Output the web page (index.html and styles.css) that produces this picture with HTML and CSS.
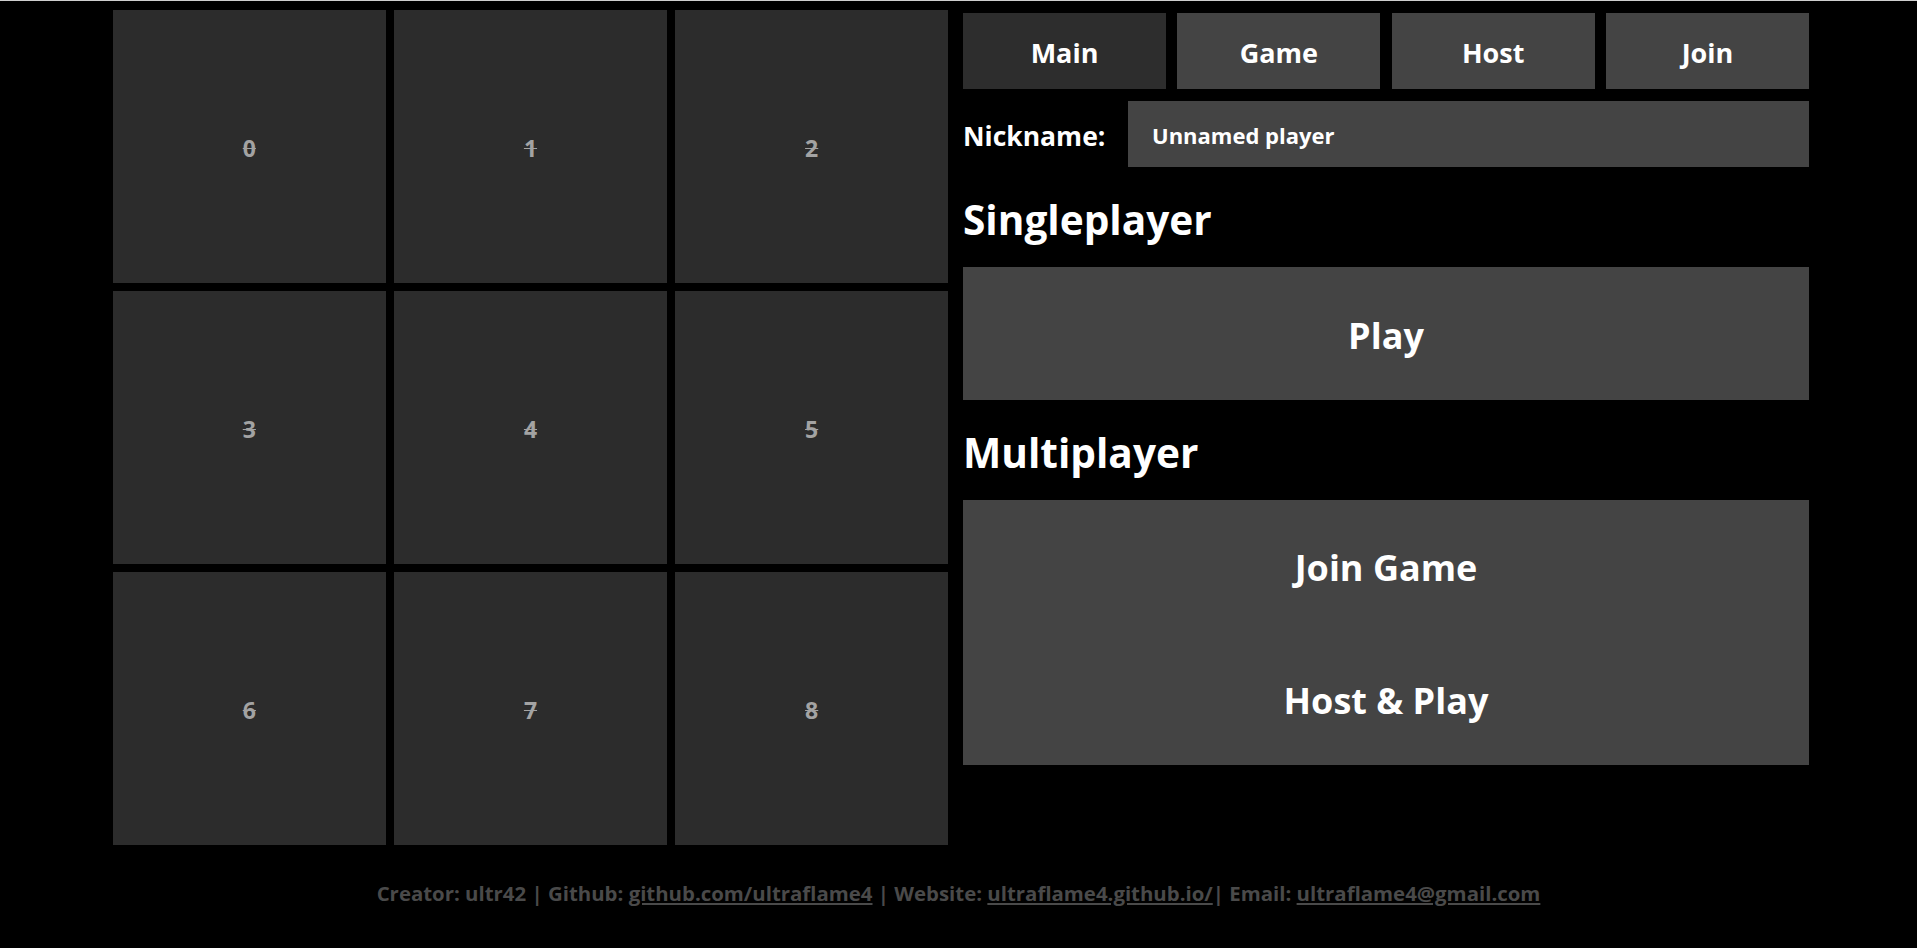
FILE: index.html
```html
<!DOCTYPE html>
<html lang="en">
<head>
<meta charset="utf-8">
<title>Tic Tac Toe</title>
<link rel="stylesheet" href="styles.css">
</head>
<body>
<div class="page">
  <div class="board">
    <div class="cell"><span class="num">0</span></div>
    <div class="cell"><span class="num">1</span></div>
    <div class="cell"><span class="num">2</span></div>
    <div class="cell"><span class="num">3</span></div>
    <div class="cell"><span class="num">4</span></div>
    <div class="cell"><span class="num">5</span></div>
    <div class="cell"><span class="num">6</span></div>
    <div class="cell"><span class="num">7</span></div>
    <div class="cell"><span class="num">8</span></div>
  </div>
  <div class="menu">
    <nav class="tabs">
      <button class="tab active">Main</button>
      <button class="tab">Game</button>
      <button class="tab">Host</button>
      <button class="tab">Join</button>
    </nav>
    <div class="nick-row">
      <label class="nick-label" for="nick">Nickname:</label>
      <input class="nick-input" id="nick" type="text" value="Unnamed player">
    </div>
    <h2 class="heading">Singleplayer</h2>
    <div class="btn-group">
      <button class="big-btn">Play</button>
    </div>
    <h2 class="heading">Multiplayer</h2>
    <div class="btn-group">
      <button class="big-btn">Join Game</button>
      <button class="big-btn">Host &amp; Play</button>
    </div>
  </div>
</div>
<footer class="footer">Creator: ultr42 | Github: <a href="#">github.com/ultraflame4</a> | Website: <a href="#">ultraflame4.github.io/</a>| Email: <a href="#">ultraflame4@gmail.com</a></footer>
</body>
</html>
```
FILE: styles.css
```css
html, body {
  margin: 0;
  padding: 0;
  background: #000;
}

body {
  border-top: 1px solid #cfcfcf;
  font-family: "Open Sans", "Noto Sans", "Liberation Sans", sans-serif;
  font-weight: 700;
  color: #fff;
  min-height: 947px;
  box-sizing: border-box;
}

.page {
  display: flex;
  align-items: flex-start;
  gap: 15px;
  padding: 9px 0 0 113px;
}

.board {
  width: 835px;
  height: 835px;
  display: grid;
  grid-template-columns: repeat(3, 1fr);
  grid-template-rows: repeat(3, 1fr);
  gap: 8.5px;
  flex: none;
}

.cell {
  background: #2c2c2c;
  display: flex;
  align-items: center;
  justify-content: center;
  padding-top: 3px;
}

.num {
  font-size: 23px;
  color: #a3a3a3;
  text-decoration: line-through;
  text-decoration-color: #a3a3a3;
  text-decoration-thickness: 1px;
}

.menu {
  width: 846px;
  flex: none;
  display: flex;
  flex-direction: column;
  padding-top: 3px;
}

.tabs {
  display: flex;
  justify-content: space-between;
}

.tab {
  width: 24%;
  height: 76px;
  border: none;
  margin: 0;
  padding: 2px 0 0;
  background: #444;
  color: #fff;
  font-family: inherit;
  font-weight: 700;
  font-size: 27px;
}

.tab.active {
  background: #2d2d2d;
}

.nick-row {
  display: flex;
  align-items: center;
  margin-top: 12px;
  height: 66px;
}

.nick-label {
  font-size: 26.5px;
  width: 165px;
  flex: none;
  padding-top: 3px;
}

.nick-input {
  flex: 1;
  height: 66px;
  box-sizing: border-box;
  border: none;
  margin: 0;
  padding: 2px 0 0 24px;
  background: #444;
  color: #fff;
  font-family: inherit;
  font-weight: 700;
  font-size: 22px;
  outline: none;
}

.heading {
  margin: 28px 0 22px;
  font-size: 40.6px;
  line-height: 50px;
  font-weight: 700;
}

.btn-group {
  display: flex;
  flex-direction: column;
  background: #444;
}

.big-btn {
  height: 132.5px;
  border: none;
  margin: 0;
  padding: 4px 0 0;
  background: #444;
  color: #fff;
  font-family: inherit;
  font-weight: 700;
  font-size: 36px;
}

.footer {
  margin-top: 34px;
  text-align: center;
  font-size: 20.4px;
  color: #4a4a4a;
}

.footer a {
  color: #4a4a4a;
  text-decoration: underline;
}
```
